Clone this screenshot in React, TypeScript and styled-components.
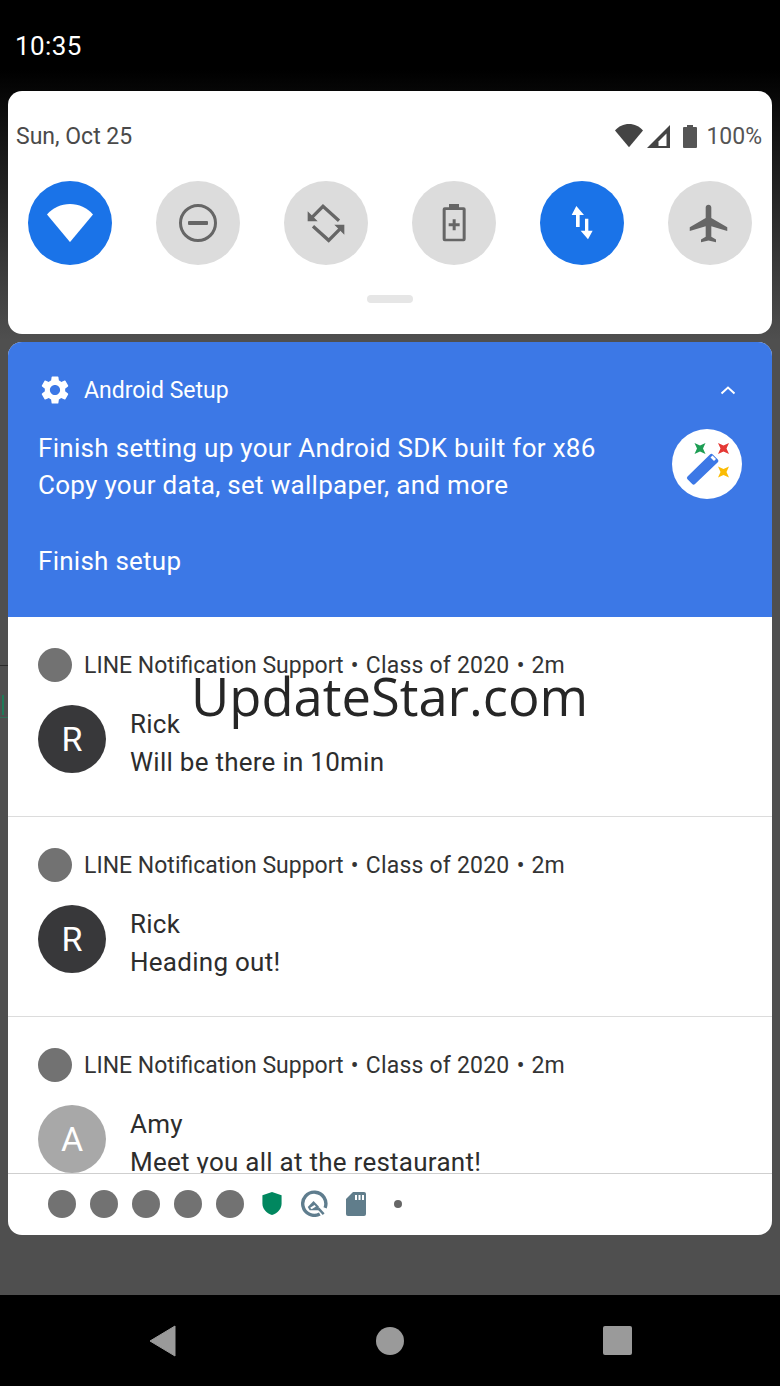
import styled, { createGlobalStyle } from "styled-components";
import { MdAirplanemodeActive, MdSettings } from "react-icons/md";

const GlobalStyle = createGlobalStyle`
  html, body {
    margin: 0;
    padding: 0;
    background: #000;
    font-family: Roboto, "Liberation Sans", sans-serif;
  }
`;

const Screen = styled.div`
  position: relative;
  display: flex;
  flex-direction: column;
  width: 780px;
  height: 1386px;
  overflow: hidden;
  background: linear-gradient(#000 70px, #4f4f4f 340px);
`;

const StatusBar = styled.div`
  display: flex;
  align-items: center;
  height: 91px;
  padding: 0 15px;
  box-sizing: border-box;
  color: #fff;
  font-size: 26px;
`;

const Clock = styled.span`
  letter-spacing: 0.4px;
`;

const QuickPanel = styled.section`
  display: flex;
  flex-direction: column;
  height: 243px;
  margin: 0 8px;
  padding: 0 10px 0 8px;
  box-sizing: border-box;
  background: #fff;
  border-radius: 14px;
`;

const QuickHeader = styled.div`
  display: flex;
  align-items: center;
  justify-content: space-between;
  height: 90px;
  color: #4a4a4a;
  font-size: 23px;
`;

const StatusIcons = styled.div`
  display: flex;
  align-items: center;
  color: #555;
`;

const WifiSlot = styled.span`
  display: flex;
  margin-right: 4px;
`;

const SignalSlot = styled.span`
  display: flex;
  margin-right: 13px;
`;

const BatterySlot = styled.span`
  display: flex;
  margin-right: 9px;
`;

const Tiles = styled.div`
  display: flex;
  justify-content: space-between;
  padding: 0 10px 0 12px;
`;

const Tile = styled.div<{ $active?: boolean }>`
  display: flex;
  align-items: center;
  justify-content: center;
  flex: none;
  width: 84px;
  height: 84px;
  border-radius: 50%;
  background: ${(p) => (p.$active ? "#1a73e8" : "#dcdcdc")};
  color: ${(p) => (p.$active ? "#fff" : "#666")};
`;

const Plane = styled(MdAirplanemodeActive)`
  margin-right: 3px;
`;

const Handle = styled.div`
  align-self: center;
  width: 46px;
  height: 8px;
  margin: 30px 0 0 2px;
  border-radius: 4px;
  background: #e6e6e6;
`;

const Drawer = styled.section`
  display: flex;
  flex-direction: column;
  height: 893px;
  margin: 8px 8px 0;
  overflow: hidden;
  background: #fff;
  border-radius: 14px;
`;

const SetupCard = styled.div`
  flex: none;
  height: 275px;
  padding: 30px 30px 0;
  box-sizing: border-box;
  background: #3c78e6;
  color: #fff;
`;

const SetupHeader = styled.div`
  display: flex;
  align-items: center;
  height: 36px;
  gap: 12px;
  font-size: 23px;
`;

const Chevron = styled.svg`
  margin-left: auto;
  margin-right: 6px;
`;

const SetupBody = styled.div`
  display: flex;
  justify-content: space-between;
  align-items: flex-start;
  margin-top: 22px;
`;

const SetupText = styled.div`
  font-size: 26px;
  line-height: 37px;
  letter-spacing: 0.3px;
`;

const SetupAction = styled.div`
  margin-top: 38px;
  font-size: 26px;
  line-height: 38px;
  letter-spacing: 0.26px;
`;

const WandBadge = styled.div`
  display: flex;
  align-items: center;
  justify-content: center;
  width: 70px;
  height: 70px;
  margin-top: -1px;
  border-radius: 50%;
  background: #fff;
`;

const Notifications = styled.div`
  flex: 1;
  min-height: 0;
  overflow: hidden;
`;

const Notification = styled.article`
  height: 200px;
  padding: 31px 30px 0;
  box-sizing: border-box;
  border-bottom: 1px solid #dcdcdc;
`;

const NotificationHeader = styled.div`
  display: flex;
  align-items: center;
  gap: 12px;
  height: 34px;
  color: #333;
  font-size: 23px;
`;

const Separator = styled.span`
  margin: 0 1.5px;
`;

const GroupName = styled.span`
  letter-spacing: 0.2px;
`;

const AppDot = styled.span`
  flex: none;
  width: 34px;
  height: 34px;
  border-radius: 50%;
  background: #727272;
`;

const Message = styled.div`
  display: flex;
  align-items: flex-start;
  gap: 24px;
  margin-top: 23px;
`;

const Avatar = styled.div<{ $tone: string }>`
  display: flex;
  align-items: center;
  justify-content: center;
  flex: none;
  width: 68px;
  height: 68px;
  border-radius: 50%;
  background: ${(p) => p.$tone};
  color: #fff;
  font-size: 34px;
`;

const MessageText = styled.div`
  color: #2d2d2d;
  font-size: 26px;
  line-height: 38px;
  letter-spacing: 0.26px;
`;

const Footer = styled.div`
  display: flex;
  align-items: center;
  flex: none;
  height: 62px;
  padding: 0 0 2px 40px;
  box-sizing: border-box;
  border-top: 1px solid #cfcfcf;
`;

const FooterDot = styled.span`
  flex: none;
  width: 28px;
  height: 28px;
  margin-right: 14px;
  border-radius: 50%;
  background: #727272;
`;

const ShieldSlot = styled.svg`
  flex: none;
  margin: 0 19px 0 4px;
`;

const RingSlot = styled.svg`
  flex: none;
  margin-right: 18px;
`;

const CardSlot = styled.svg`
  flex: none;
  margin-right: 28px;
`;

const MoreDot = styled.span`
  flex: none;
  width: 8px;
  height: 8px;
  border-radius: 50%;
  background: #666;
`;

const NavBar = styled.nav`
  display: flex;
  align-items: center;
  justify-content: center;
  flex: none;
  gap: 199px;
  height: 91px;
  margin-top: 60px;
  background: #000;
`;

const Watermark = styled.div`
  position: absolute;
  top: 660px;
  left: 191px;
  color: #262626;
  font-family: "Open Sans", sans-serif;
  font-size: 52.5px;
  line-height: 72px;
  white-space: nowrap;
`;

// bits of the app behind the shade, showing in the left gutter
const GutterLine = styled.div`
  position: absolute;
  top: 665px;
  left: 0;
  width: 8px;
  height: 1px;
  background: #2c2c2c;
`;

const GutterMark = styled.div`
  position: absolute;
  top: 695px;
  left: 0;
  width: 8px;
  height: 23px;
  box-sizing: border-box;
  border-bottom: 1px solid #2f7058;
  &::before {
    content: "";
    display: block;
    width: 2px;
    height: 20px;
    margin-left: 2px;
    background: #1f7a58;
  }
`;

const WifiWedge = ({ size, fill }: { size: number; fill: string }) => (
  <svg width={size} height={size * 0.83} viewBox="0 0 46 38">
    <path d="M0 10.500C6 3.800 14 0 23 0s17 3.800 23 10.500L23 38z" fill={fill} />
  </svg>
);

const Dnd = () => (
  <svg width="40" height="40" viewBox="0 0 40 40">
    <circle cx="20" cy="20" r="17.500" fill="none" stroke="currentColor" strokeWidth="3" />
    <rect x="10" y="18" width="20" height="4" rx="1" fill="currentColor" />
  </svg>
);

const Rotate = () => (
  <svg width="40" height="40" viewBox="917 335 120 120" fill="currentColor">
    <path d="M1016 388L968 345 935 378M938 405l47 42 35-35" fill="none" stroke="currentColor" strokeWidth="10" />
    <path d="M922 360v30h30zM1032 430v-30h-30z" />
  </svg>
);

const BatterySaver = () => (
  <svg width="40" height="40" viewBox="130 337 120 120" fill="currentColor">
    <path
      fillRule="evenodd"
      d="M175 340h30v10h14a6 6 0 0 1 6 6v90a6 6 0 0 1-6 6h-57a6 6 0 0 1-6-6v-90a6 6 0 0 1 6-6h13zM165 358v86h51v-86z"
    />
    <path d="M186 386h9v12h12v9h-12v12h-9v-12h-12v-9h12z" />
  </svg>
);

const DataArrows = () => (
  <svg width="40" height="40" viewBox="513 337 120 120" fill="currentColor">
    <path d="M556 346l23 27h-13v36h-11v-36h-13z" />
    <path d="M591 446l-22-26h13v-36h10v36h13z" />
  </svg>
);

const SignalIcon = () => (
  <svg width="23" height="23" viewBox="0 0 23 23">
    <path d="M0 23L23 0v23z" fill="#444" />
    <path d="M11.500 16.500l8-8V21h-8z" fill="#fff" />
  </svg>
);

const BatteryIcon = () => (
  <svg width="14" height="23" viewBox="0 0 14 23" fill="#555">
    <path d="M4 0h6v2h3a1 1 0 0 1 1 1v19a1 1 0 0 1-1 1H1a1 1 0 0 1-1-1V3a1 1 0 0 1 1-1h3z" />
  </svg>
);

const Sparkle = ({ x, y, fill }: { x: number; y: number; fill: string }) => (
  <path d={`M${x - 5.5} ${y - 5.5}l5.500 2.500 5.500-2.500-2.500 5.500 2.500 5.500-5.500-2.500-5.500 2.500 2.500-5.500z`} fill={fill} />
);

const WandIcon = () => (
  <svg width="70" height="70" viewBox="0 0 70 70">
    <Sparkle x={28} y={19.5} fill="#1e9e54" />
    <Sparkle x={51.5} y={19.5} fill="#e53935" />
    <Sparkle x={51.5} y={43} fill="#fbbc04" />
    <path d="M15.500 47.500L38 25.500a2 2 0 0 1 2.800 0l5 5a2 2 0 0 1 0 2.800L23 55a2 2 0 0 1-2.800 0l-4.700-4.700a2 2 0 0 1 0-2.800z" fill="#3c78e6" />
    <path d="M38.500 28.500l2-2 3.500 3.500-2 2z" fill="#fff" />
  </svg>
);

const Shield = () => (
  <ShieldSlot width="20" height="23" viewBox="0 0 20 24">
    <path d="M10 0l10 3.500v8.500c0 5.500-4 10-10 12C4 22 0 17.500 0 12V3.500z" fill="#01875f" />
  </ShieldSlot>
);

const QIcon = () => (
  <RingSlot width="27" height="27" viewBox="0 0 28 28">
    <path d="M19.500 24.800A12 12 0 1 1 25 18.500" fill="none" stroke="#5f7d8e" strokeWidth="3.500" />
    <path d="M7 17.500l6-6 5.500 5.500v4H9z" fill="#5f7d8e" />
    <path d="M18 19l5.500 6" fill="none" stroke="#5f7d8e" strokeWidth="2.500" />
    <path d="M9.500 18.500l4.500-3 1.500 1.500-4.500 3z" fill="#fff" />
  </RingSlot>
);

const SdCard = () => (
  <CardSlot width="20" height="24" viewBox="0 0 20 24">
    <path d="M7 0h11a2 2 0 0 1 2 2v20a2 2 0 0 1-2 2H2a2 2 0 0 1-2-2V7z" fill="#607d8b" />
    <path d="M9 3h2v5H9zM12.500 3h2v5h-2zM16 3h2v5h-2z" fill="#fff" />
  </CardSlot>
);

const items = [
  { tone: "#38383a", initial: "R", name: "Rick", text: "Will be there in 10min" },
  { tone: "#38383a", initial: "R", name: "Rick", text: "Heading out!" },
  { tone: "#a8a8a8", initial: "A", name: "Amy", text: "Meet you all at the restaurant!" },
];

const App = () => {
  return (
    <Screen>
      <GlobalStyle />
      <StatusBar>
        <Clock>10:35</Clock>
      </StatusBar>

      <QuickPanel>
        <QuickHeader>
          <span>Sun, Oct 25</span>
          <StatusIcons>
            <WifiSlot>
              <WifiWedge size={28} fill="#444" />
            </WifiSlot>
            <SignalSlot>
              <SignalIcon />
            </SignalSlot>
            <BatterySlot>
              <BatteryIcon />
            </BatterySlot>
            <span>100%</span>
          </StatusIcons>
        </QuickHeader>
        <Tiles>
          <Tile $active>
            <WifiWedge size={46} fill="#fff" />
          </Tile>
          <Tile>
            <Dnd />
          </Tile>
          <Tile>
            <Rotate />
          </Tile>
          <Tile>
            <BatterySaver />
          </Tile>
          <Tile $active>
            <DataArrows />
          </Tile>
          <Tile>
            <Plane size={45} />
          </Tile>
        </Tiles>
        <Handle />
      </QuickPanel>

      <Drawer>
        <SetupCard>
          <SetupHeader>
            <MdSettings size={34} />
            <span>Android Setup</span>
            <Chevron width="16" height="10" viewBox="0 0 16 10">
              <path d="M1.500 8.500L8 2.500l6.500 6" fill="none" stroke="#fff" strokeWidth="2" />
            </Chevron>
          </SetupHeader>
          <SetupBody>
            <SetupText>
              Finish setting up your Android SDK built for x86
              <br />
              Copy your data, set wallpaper, and more
            </SetupText>
            <WandBadge>
              <WandIcon />
            </WandBadge>
          </SetupBody>
          <SetupAction>Finish setup</SetupAction>
        </SetupCard>

        <Notifications>
          {items.map((item, i) => (
            <Notification key={i}>
              <NotificationHeader>
                <AppDot />
                <span>
                  LINE Notification Support <Separator>•</Separator> <GroupName>Class of 2020</GroupName>{" "}
                  <Separator>•</Separator> 2m
                </span>
              </NotificationHeader>
              <Message>
                <Avatar $tone={item.tone}>{item.initial}</Avatar>
                <MessageText>
                  {item.name}
                  <br />
                  {item.text}
                </MessageText>
              </Message>
            </Notification>
          ))}
        </Notifications>

        <Footer>
          <FooterDot />
          <FooterDot />
          <FooterDot />
          <FooterDot />
          <FooterDot />
          <Shield />
          <QIcon />
          <SdCard />
          <MoreDot />
        </Footer>
      </Drawer>

      <NavBar>
        <svg width="28" height="32" viewBox="0 0 28 32">
          <path d="M26 1L1 16l25 15z" fill="#9a9a9a" stroke="#9a9a9a" strokeLinejoin="round" />
        </svg>
        <svg width="28" height="28" viewBox="0 0 28 28">
          <circle cx="14" cy="14" r="14" fill="#9a9a9a" />
        </svg>
        <svg width="29" height="29" viewBox="0 0 29 29">
          <rect width="29" height="29" rx="2" fill="#9a9a9a" />
        </svg>
      </NavBar>

      <GutterLine />
      <GutterMark />
      <Watermark>UpdateStar.com</Watermark>
    </Screen>
  );
};

export default App;
